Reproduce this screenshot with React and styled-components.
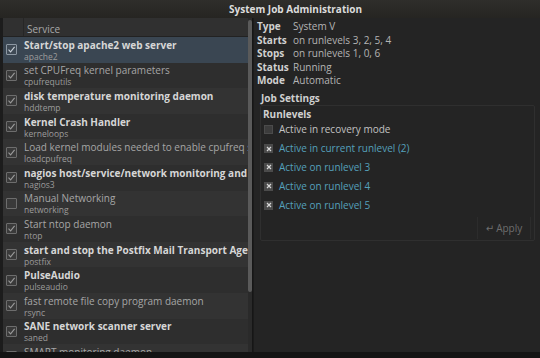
import React from "react";
import styled, { createGlobalStyle } from "styled-components";

const Global = createGlobalStyle`
  html, body { margin: 0; padding: 0; background: #1e1e1e; }
  body { font-family: "Open Sans", "DejaVu Sans", sans-serif; }
`;

const Window = styled.div`
  width: 540px;
  height: 358px;
  display: flex;
  flex-direction: column;
  background: #232323;
  overflow: hidden;
`;

const TitleBar = styled.div`
  height: 18px;
  flex: none;
  background: linear-gradient(#2f2e2b, #262522);
  display: flex;
  align-items: center;
  padding-left: 229px;
  color: #dcdcdc;
  font-weight: 700;
  font-size: 10px;
`;

const Body = styled.div`
  flex: 1;
  display: flex;
  min-height: 0;
`;

const ListPane = styled.div`
  width: 249px;
  flex: none;
  display: flex;
  border-left: 3px solid #1c1c1c;
  border-right: 1px solid #161616;
  background: #2c2c2c;
`;

const List = styled.div`
  flex: 1;
  display: flex;
  flex-direction: column;
  overflow: hidden;
`;

const ScrollTrack = styled.div`
  width: 4px;
  flex: none;
  background: #2a2a2a;
  display: flex;
  flex-direction: column;
`;

const ScrollThumb = styled.div`
  height: 272px;
  background: #5a5a5a;
  border-radius: 2px;
  margin-top: 2px;
`;

const HeaderRow = styled.div`
  height: 18px;
  flex: none;
  display: flex;
  background: #303030;
  border-bottom: 1px solid #222;
`;

const HeaderCheckCell = styled.div`
  width: 20px;
  border-right: 1px solid #262626;
`;

const HeaderCell = styled.div`
  flex: 1;
  display: flex;
  align-items: center;
  padding-left: 3px;
  padding-top: 3px;
  font-size: 10px;
  color: #a9a9a9;
`;

const Row = styled.div`
  height: 25.6px;
  flex: none;
  display: flex;
  align-items: center;
  background: ${(p) => (p.$selected ? "#3a4652" : p.$odd ? "#2e2e2e" : "#333333")};
  overflow: hidden;
  white-space: nowrap;
`;

const CheckCell = styled.div`
  width: 21px;
  flex: none;
  display: flex;
  padding-left: 3px;
  box-sizing: border-box;
`;

const Box = styled.div`
  width: 11px;
  height: 11px;
  box-sizing: border-box;
  border: 1px solid ${(p) => (p.$selected ? "#8d98a3" : "#6d6d6d")};
  background: ${(p) => (p.$selected ? "#3f4a55" : "#3a3a3a")};
  border-radius: 1px;
  display: flex;
  align-items: center;
  justify-content: center;
`;

const RowText = styled.div`
  display: flex;
  flex-direction: column;
  padding-top: 1px;
`;

const Title = styled.span`
  font-size: 10px;
  font-weight: ${(p) => (p.$bold ? 700 : 400)};
  color: ${(p) => (p.$bold ? "#d6d6d6" : "#a6a6a6")};
  line-height: 13px;
`;

const Sub = styled.span`
  font-size: 8.5px;
  color: #9c9c9c;
  line-height: 10px;
`;

const DetailPane = styled.div`
  flex: 1;
  display: flex;
  flex-direction: column;
  padding: 2px 5px 0 3px;
  background: #242424;
  border-left: 1px solid #1b1b1b;
`;

const Props = styled.div`
  display: grid;
  grid-template-columns: 36px auto;
  font-size: 10px;
  line-height: 13.5px;
`;

const PropLabel = styled.span`
  font-weight: 700;
  color: #d0d0d0;
`;

const PropValue = styled.span`
  color: #b4b4b4;
`;

const Frame = styled.div`
  margin: 4px 0 0 3px;
  display: flex;
  flex-direction: column;
`;

const FrameLabel = styled.div`
  font-size: 10px;
  font-weight: 700;
  color: #cfcfcf;
  line-height: 13px;
  padding-left: 1px;
`;

const FrameBox = styled.div`
  border: 1px solid #2f2f2f;
  border-radius: 2px;
  padding: 2px 3px 1px 2px;
  display: flex;
  flex-direction: column;
`;

const SectionLabel = styled.div`
  font-size: 10px;
  font-weight: 700;
  color: #d0d0d0;
  line-height: 13px;
`;

const Options = styled.div`
  display: flex;
  flex-direction: column;
  padding: 0 0 0 1px;
`;

const Option = styled.div`
  height: 18.8px;
  display: flex;
  align-items: center;
  gap: 6px;
  font-size: 10px;
  line-height: 13px;
  color: ${(p) => (p.$active ? "#55a0bb" : "#c2c2c2")};
`;

const SmallBox = styled.div`
  width: 9px;
  height: 9px;
  box-sizing: border-box;
  background: ${(p) => (p.$checked ? "#4a4a4a" : "#3c3c3c")};
  border: 1px solid #4b4b4b;
  display: flex;
  align-items: center;
  justify-content: center;
`;

const ButtonRow = styled.div`
  display: flex;
  justify-content: flex-end;
  margin-top: 3px;
`;

const ApplyButton = styled.div`
  width: 52px;
  height: 22px;
  display: flex;
  align-items: center;
  justify-content: center;
  gap: 2px;
  border-left: 1px solid #2c2c2c;
  border-right: 1px solid #2c2c2c;
  color: #6e6e6e;
  font-size: 10px;
`;

const BottomStrip = styled.div`
  height: 6px;
  flex: none;
  background: #141414;
`;

const Tick = ({ color }) => (
  <svg width="9" height="9" viewBox="0 0 9 9">
    <path d="M1.5 4.6 L3.6 6.8 L7.6 1.8" fill="none" stroke={color} strokeWidth="1.1" />
  </svg>
);

const Cross = () => (
  <svg width="6" height="6" viewBox="0 0 6 6">
    <path d="M1 1 L5 5 M5 1 L1 5" stroke="#d8d8d8" strokeWidth="1.2" />
  </svg>
);

const services = [
  { t: "Start/stop apache2 web server", s: "apache2", b: true, c: true, sel: true },
  { t: "set CPUFreq kernel parameters", s: "cpufrequtils", b: false, c: true },
  { t: "disk temperature monitoring daemon", s: "hddtemp", b: true, c: true },
  { t: "Kernel Crash Handler", s: "kerneloops", b: true, c: true },
  { t: "Load kernel modules needed to enable cpufreq scaling", s: "loadcpufreq", b: false, c: true },
  { t: "nagios host/service/network monitoring and management daemon", s: "nagios3", b: true, c: true },
  { t: "Manual Networking", s: "networking", b: false, c: false },
  { t: "Start ntop daemon", s: "ntop", b: false, c: true },
  { t: "start and stop the Postfix Mail Transport Agent", s: "postfix", b: true, c: true },
  { t: "PulseAudio", s: "pulseaudio", b: true, c: true },
  { t: "fast remote file copy program daemon", s: "rsync", b: false, c: true },
  { t: "SANE network scanner server", s: "saned", b: true, c: true },
  { t: "SMART monitoring daemon", s: "smartmontools", b: false, c: true },
];

const props = [
  ["Type", "System V"],
  ["Starts", "on runlevels 3, 2, 5, 4"],
  ["Stops", "on runlevels 1, 0, 6"],
  ["Status", "Running"],
  ["Mode", "Automatic"],
];

const options = [
  { label: "Active in recovery mode", checked: false },
  { label: "Active in current runlevel (2)", checked: true },
  { label: "Active on runlevel 3", checked: true },
  { label: "Active on runlevel 4", checked: true },
  { label: "Active on runlevel 5", checked: true },
];

export default function App() {
  return (
    <>
      <Global />
      <Window>
        <TitleBar>System Job Administration</TitleBar>
        <Body>
          <ListPane>
            <List>
              <HeaderRow>
                <HeaderCheckCell />
                <HeaderCell>Service</HeaderCell>
              </HeaderRow>
              {services.map((s, i) => (
                <Row key={s.s} $selected={s.sel} $odd={i % 2 === 1}>
                  <CheckCell>
                    <Box $selected={s.sel}>{s.c && <Tick color={s.sel ? "#c8d0d8" : "#9a9a9a"} />}</Box>
                  </CheckCell>
                  <RowText>
                    <Title $bold={s.b}>{s.t}</Title>
                    <Sub>{s.s}</Sub>
                  </RowText>
                </Row>
              ))}
            </List>
            <ScrollTrack>
              <ScrollThumb />
            </ScrollTrack>
          </ListPane>
          <DetailPane>
            <Props>
              {props.map(([l, v]) => (
                <React.Fragment key={l}>
                  <PropLabel>{l}</PropLabel>
                  <PropValue>{v}</PropValue>
                </React.Fragment>
              ))}
            </Props>
            <Frame>
              <FrameLabel>Job Settings</FrameLabel>
              <FrameBox>
                <SectionLabel>Runlevels</SectionLabel>
                <Options>
                  {options.map((o) => (
                    <Option key={o.label} $active={o.checked}>
                      <SmallBox $checked={o.checked}>{o.checked && <Cross />}</SmallBox>
                      {o.label}
                    </Option>
                  ))}
                </Options>
                <ButtonRow>
                  <ApplyButton>
                    <span>↵</span>Apply
                  </ApplyButton>
                </ButtonRow>
              </FrameBox>
            </Frame>
          </DetailPane>
        </Body>
        <BottomStrip />
      </Window>
    </>
  );
}
